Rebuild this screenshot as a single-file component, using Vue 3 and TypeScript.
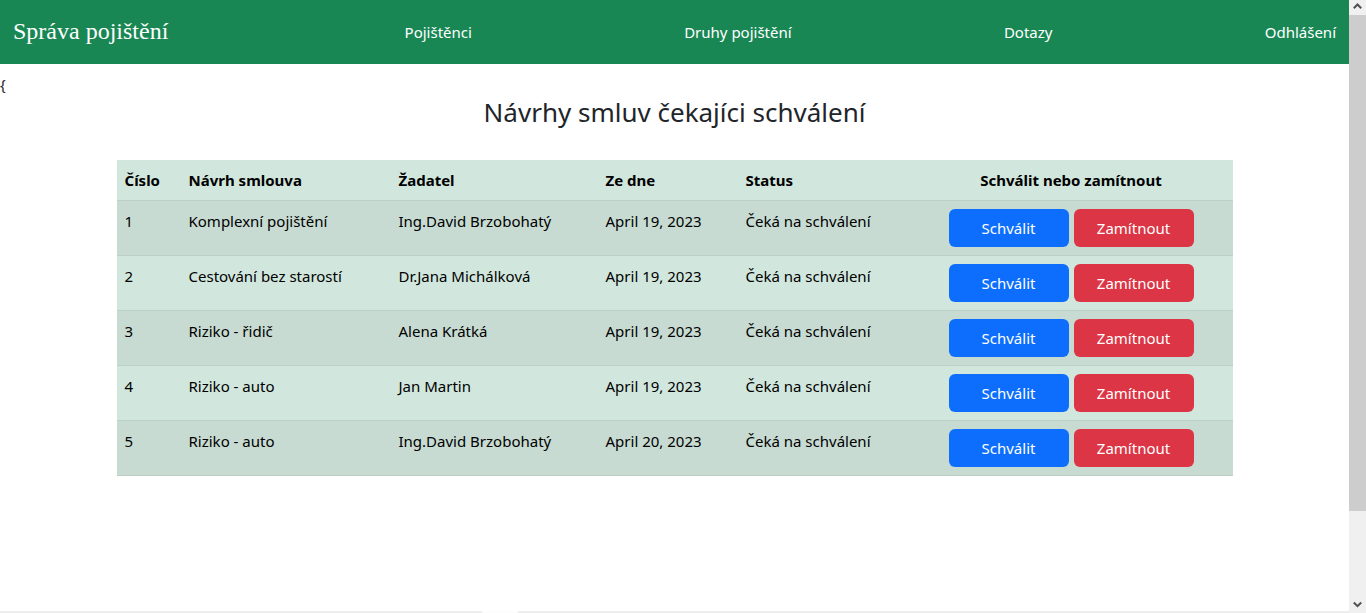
<script setup lang="ts">
interface Proposal {
  id: number
  name: string
  applicant: string
  date: string
  status: string
}

const links: string[] = ['Pojištěnci', 'Druhy pojištění', 'Dotazy', 'Odhlášení']

const waiting = 'Čeká na schválení'
const proposals: Proposal[] = [
  { id: 1, name: 'Komplexní pojištění', applicant: 'Ing.David Brzobohatý', date: 'April 19, 2023', status: waiting },
  { id: 2, name: 'Cestování bez starostí', applicant: 'Dr.Jana Michálková', date: 'April 19, 2023', status: waiting },
  { id: 3, name: 'Riziko - řidič', applicant: 'Alena Krátká', date: 'April 19, 2023', status: waiting },
  { id: 4, name: 'Riziko - auto', applicant: 'Jan Martin', date: 'April 19, 2023', status: waiting },
  { id: 5, name: 'Riziko - auto', applicant: 'Ing.David Brzobohatý', date: 'April 20, 2023', status: waiting },
]
</script>

<template>
  <div class="window">
    <div class="page">
      <nav class="navbar">
        <a class="brand" href="#">Správa pojištění</a>
        <a v-for="link in links" :key="link" class="nav-link" href="#">{{ link }}</a>
      </nav>
      <main class="content">
        <div class="stray">{</div>
        <h1 class="title">Návrhy smluv čekajíci schválení</h1>
        <div class="container">
          <table class="table">
            <colgroup>
              <col class="c-id" />
              <col class="c-name" />
              <col class="c-applicant" />
              <col class="c-date" />
              <col class="c-status" />
              <col class="c-actions" />
            </colgroup>
            <thead>
              <tr>
                <th scope="col">Číslo</th>
                <th scope="col">Návrh smlouva</th>
                <th scope="col">Žadatel</th>
                <th scope="col">Ze dne</th>
                <th scope="col">Status</th>
                <th scope="col" class="center">Schválit nebo zamítnout</th>
              </tr>
            </thead>
            <tbody>
              <tr v-for="p in proposals" :key="p.id">
                <td>{{ p.id }}</td>
                <td>{{ p.name }}</td>
                <td>{{ p.applicant }}</td>
                <td>{{ p.date }}</td>
                <td>{{ p.status }}</td>
                <td>
                  <div class="actions">
                    <button type="button" class="btn approve">Schválit</button>
                    <button type="button" class="btn reject">Zamítnout</button>
                  </div>
                </td>
              </tr>
            </tbody>
          </table>
        </div>
      </main>
      <div class="bottom-edge"><span class="edge-left"></span><span class="edge-gap"></span><span class="edge-right"></span></div>
    </div>
    <div class="scrollbar" aria-hidden="true">
      <svg class="arrow" viewBox="0 0 17 15"><path d="M4.8 8.2 8.5 4.5l3.7 3.7" /></svg>
      <div class="track">
        <div class="thumb"></div>
      </div>
      <svg class="arrow" viewBox="0 0 17 15"><path d="M4.8 4.5 8.5 8.2l3.7-3.7" /></svg>
    </div>
  </div>
</template>

<style>
body {
  margin: 0;
  background: #fff;
}
</style>

<style scoped>
.window {
  display: flex;
  height: 100vh;
  overflow: hidden;
  font-family: "Segoe UI", "Noto Sans", "Open Sans", sans-serif;
  font-size: 15px;
  line-height: 24px;
  color: #212529;
}
.page {
  flex: 1;
  min-width: 0;
  display: flex;
  flex-direction: column;
}
.navbar {
  display: flex;
  align-items: center;
  justify-content: space-between;
  height: 64px;
  padding: 0 13px;
  background: #198754;
}
.brand {
  margin-right: 24px;
  padding-bottom: 2px;
  font-family: "Times New Roman", "Liberation Serif", serif;
  font-size: 24px;
  line-height: 32px;
  color: #fff;
  text-decoration: none;
}
.nav-link {
  color: #fff;
  text-decoration: none;
}
.content {
  flex: 1;
  padding-top: 8px;
}
.title {
  margin: 0 0 32px;
  font-size: 26px;
  font-weight: 400;
  line-height: 32px;
  text-align: center;
}
.container {
  box-sizing: border-box;
  max-width: 1140px;
  margin: 0 auto;
  padding: 0 12px;
}
.table {
  width: 100%;
  table-layout: fixed;
  border-collapse: collapse;
  background: #d1e7dd;
  color: #000;
}
.c-id { width: 64px; }
.c-name { width: 210px; }
.c-applicant { width: 207px; }
.c-date { width: 140px; }
.c-status { width: 172px; }
.c-actions { width: 323px; }
th,
td {
  padding: 8px;
  border-bottom: 1px solid #bcd0c7;
  text-align: left;
  vertical-align: top;
  white-space: nowrap;
}
th {
  font-weight: 700;
}
th.center {
  text-align: center;
}
tbody tr:nth-child(odd) {
  background: #c7dbd2;
}
.actions {
  display: flex;
  justify-content: center;
  gap: 5px;
}
.btn {
  width: 120px;
  height: 38px;
  padding: 0;
  border: 0;
  border-radius: 6px;
  font: inherit;
  color: #fff;
  cursor: pointer;
}
.approve { background: #0d6efd; }
.reject { background: #dc3545; }
.bottom-edge {
  display: flex;
  height: 2px;
}
.edge-left { flex: 482; background: #eee; }
.edge-gap { flex: 36; background: #fdfdfd; }
.edge-right { flex: 831; background: #eee; }
.scrollbar {
  flex: none;
  display: flex;
  flex-direction: column;
  width: 17px;
  background: #f0f0f0;
}
.arrow {
  width: 17px;
  height: 15px;
}
.arrow path {
  fill: none;
  stroke: #505050;
  stroke-width: 2;
}
.track {
  flex: 1;
}
.thumb {
  height: 85%;
  background: #cdcdcd;
}
</style>
